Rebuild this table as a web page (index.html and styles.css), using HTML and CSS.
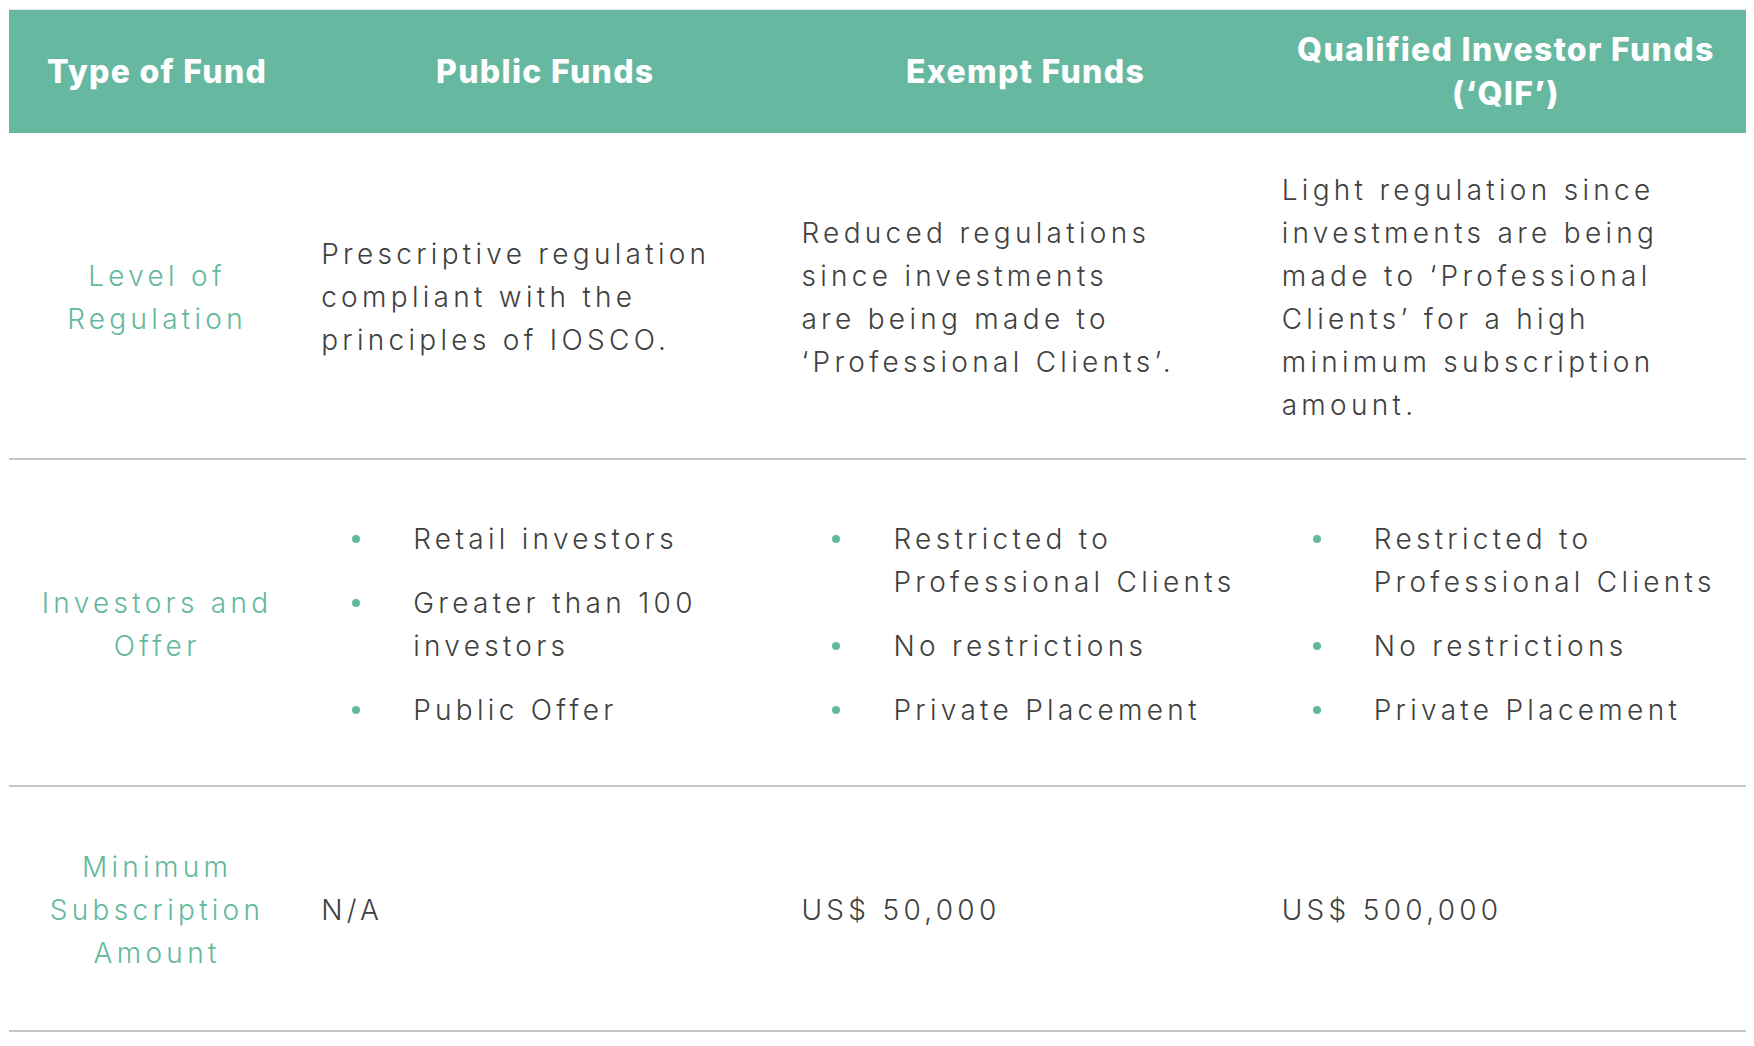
FILE: index.html
```html
<!DOCTYPE html>
<html lang="en">
<head>
<meta charset="utf-8">
<title>Type of Fund</title>
<link rel="stylesheet" href="styles.css">
</head>
<body>
<table class="funds">
  <colgroup>
    <col class="c-label">
    <col class="c-fund">
    <col class="c-fund">
    <col class="c-fund">
  </colgroup>
  <thead>
    <tr>
      <th>Type of Fund</th>
      <th>Public Funds</th>
      <th>Exempt Funds</th>
      <th>Qualified Investor Funds<br>(‘QIF’)</th>
    </tr>
  </thead>
  <tbody>
    <tr class="row-reg">
      <td class="label">Level of<br>Regulation</td>
      <td>Prescriptive regulation<br>compliant with the<br>principles of IOSCO.</td>
      <td>Reduced regulations<br>since investments<br>are being made to<br>‘Professional Clients’.</td>
      <td>Light regulation since<br>investments are being<br>made to ‘Professional<br>Clients’ for a high<br>minimum subscription<br>amount.</td>
    </tr>
    <tr class="row-inv">
      <td class="label">Investors and<br>Offer</td>
      <td>
        <ul class="dots">
          <li>Retail investors</li>
          <li>Greater than 100<br>investors</li>
          <li>Public Offer</li>
        </ul>
      </td>
      <td>
        <ul class="dots">
          <li>Restricted to<br>Professional Clients</li>
          <li>No restrictions</li>
          <li>Private Placement</li>
        </ul>
      </td>
      <td>
        <ul class="dots">
          <li>Restricted to<br>Professional Clients</li>
          <li>No restrictions</li>
          <li>Private Placement</li>
        </ul>
      </td>
    </tr>
    <tr class="row-min">
      <td class="label">Minimum<br>Subscription<br>Amount</td>
      <td>N/A</td>
      <td>US$ 50,000</td>
      <td>US$ 500,000</td>
    </tr>
  </tbody>
</table>
</body>
</html>
```
FILE: styles.css
```css
html, body {
  background: #ffffff;
}

body {
  margin: 9px 8px 0 9px;
  font-family: "Inter", "Liberation Sans", sans-serif;
  color: #404040;
}

.funds {
  width: 1737px;
  table-layout: fixed;
  border-collapse: separate;
  border-spacing: 0;
  border-top: 1px solid #e3e8e6;
}

.c-label {
  width: 296px;
}

.c-fund {
  width: 480px;
}

.funds th {
  height: 123px;
  padding: 0 8px;
  background: #66b9a0;
  color: #ffffff;
  font-family: "Inter", "Liberation Sans", sans-serif;
  font-weight: 800;
  font-size: 32px;
  line-height: 44px;
  letter-spacing: 1.3px;
  text-align: center;
  vertical-align: middle;
  white-space: nowrap;
}

.funds td {
  padding: 4px 16px 0;
  font-weight: 350;
  font-size: 28px;
  line-height: 43px;
  letter-spacing: 4.3px;
  text-align: left;
  vertical-align: middle;
  white-space: nowrap;
  border-bottom: 2px solid #c6c6c6;
}

.funds td.label {
  color: #64b89d;
  text-align: center;
  padding-left: 8px;
  padding-right: 8px;
}

.row-reg td {
  height: 321px;
}

.row-inv td {
  height: 321px;
}

.row-min td {
  height: 239px;
}

.dots {
  list-style: none;
  margin: 0;
  padding: 0 0 0 92px;
}

.dots li {
  position: relative;
}

.dots li + li {
  margin-top: 21px;
}

.dots li::before {
  content: "";
  position: absolute;
  left: -61px;
  top: 17px;
  width: 8px;
  height: 8px;
  border-radius: 50%;
  background: #64b89d;
}
```
